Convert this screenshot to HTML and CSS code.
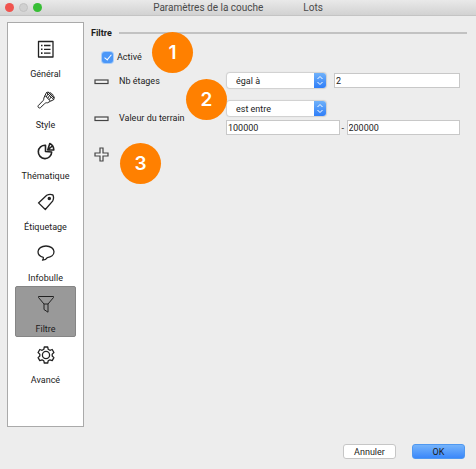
FILE: index.html
```html
<!DOCTYPE html>
<html lang="fr">
<head>
<meta charset="utf-8">
<title>Paramètres de la couche</title>
<link rel="stylesheet" href="styles.css">
</head>
<body>
<header class="titlebar">
  <div class="lights"><i class="light red"></i><i class="light grey"></i><i class="light green"></i></div>
  <h1 class="title"><span>Paramètres de la couche</span><span>Lots</span></h1>
</header>
<div class="content">
  <nav class="sidebar">
    <button type="button" class="tab">
      <svg class="icon" viewBox="0 0 18 18"><rect x="1.500" y="1.500" width="14.500" height="15.500"/><path d="M7 5.500h6.500M7 9.300h6.500M7 13.100h6.500"/><path d="M4 5.500h1.500M4 9.300h1.500M4 13.100h1.500" stroke-width="1.600"/></svg>
      <span>Général</span>
    </button>
    <button type="button" class="tab">
      <svg class="icon thin" viewBox="0 0 18 18"><path d="M8 4.500 13.500 10.200 10.500 11.800C9 11.600 8.200 12 7.300 13L3.300 16.800C2 17.600.4 16 1.200 14.700L5.700 10C6.600 9.200 6.900 8.400 6.800 7.200z"/><path d="M8 4.500 9.500 1.500 16.800 8.600 13.500 10.200M9.500 1.500l1.600-.4 6 6-.3 1.500M9.300 5.900l1.700-3M10.700 7.300l1.900-2.900M12.100 8.700l2.100-2.700M11.100 1.100l1.500.9 1.200-.2.600 1.300 1.300.3.300 1.400 1.200.9-.1 1.400"/></svg>
      <span>Style</span>
    </button>
    <button type="button" class="tab">
      <svg class="icon bold" viewBox="0 0 18 18"><path d="M8.500 3.200A6.700 6.700 0 1 0 14.700 10L8.500 9.500z"/><path d="M10.700 8 12.800 1.600c2.300 1 3.900 3.300 4 6.400zM10.700 8l4.600-4"/></svg>
      <span>Thématique</span>
    </button>
    <button type="button" class="tab">
      <svg class="icon" viewBox="0 0 18 18"><path d="M1.500 9.900 9.700 2.300c1.800-1 4.700-1 6.100-.4.900 1.700.9 4.300-.2 6.200L8.300 16.500z"/><circle cx="12.300" cy="5.500" r="1.100" class="dot"/></svg>
      <span>Étiquetage</span>
    </button>
    <button type="button" class="tab">
      <svg class="icon" viewBox="0 0 18 18"><path d="M6.300 13.300C3.300 12.600 1 10.500 1 7.800 1 4.400 4.600 2 9 2s8 2.400 8 5.800c0 3.200-3 5.400-6.700 5.800-.9 1.500-2.500 2.500-4.800 2.600.8-.8 1-1.800.8-2.900z"/></svg>
      <span>Infobulle</span>
    </button>
    <button type="button" class="tab selected" aria-current="page">
      <svg class="icon thin" viewBox="0 0 18 18"><path d="M1.500 1.500h15v1L11 9v8.200L7 14.500V9L1.500 2.500zM7 9h4"/></svg>
      <span>Filtre</span>
    </button>
    <button type="button" class="tab">
      <svg class="icon" viewBox="0 0 18 18"><path d="M7.300 1h3.400l.5 2.300 1.700 1 2.300-.8 1.700 3-1.700 1.600v1.900l1.700 1.600-1.700 3-2.300-.8-1.700 1-.5 2.200H7.300l-.5-2.200-1.700-1-2.300.8-1.700-3L2.800 10V8.100L1.100 6.500l1.700-3 2.300.8 1.700-1z"/><circle cx="9" cy="9" r="3.600"/></svg>
      <span>Avancé</span>
    </button>
  </nav>
  <main class="panel">
    <h2 class="heading">Filtre</h2>
    <div class="activation">
      <input type="checkbox" id="active" class="check" checked>
      <label for="active">Activé</label>
      <span class="badge badge-one">1</span>
    </div>
    <div class="rule">
      <button type="button" class="tool" aria-label="Supprimer"><svg class="tool-icon" viewBox="0 0 15 15"><rect x="1" y="6" width="13" height="3.500"/></svg></button>
      <label for="floors-op">Nb étages</label>
      <div class="controls">
        <div class="pair">
          <span class="picker"><select id="floors-op"><option>égal à</option></select><svg class="arrows" viewBox="0 0 12 15"><path d="M3.500 6 6 3.500 8.500 6M3.500 9 6 11.500 8.500 9"/></svg></span>
          <input type="text" class="field" aria-label="Nombre d'étages" value="2">
        </div>
      </div>
    </div>
    <div class="rule">
      <button type="button" class="tool" aria-label="Supprimer"><svg class="tool-icon" viewBox="0 0 15 15"><rect x="1" y="6" width="13" height="3.500"/></svg></button>
      <label for="value-op">Valeur du terrain</label>
      <div class="controls">
        <div class="pair">
          <span class="picker"><select id="value-op"><option>est entre</option></select><svg class="arrows" viewBox="0 0 12 15"><path d="M3.500 6 6 3.500 8.500 6M3.500 9 6 11.500 8.500 9"/></svg></span>
        </div>
        <div class="range">
          <input type="text" class="field" aria-label="Minimum" value="100000">
          <span>-</span>
          <input type="text" class="field" aria-label="Maximum" value="200000">
        </div>
        <span class="badge badge-two">2</span>
      </div>
    </div>
    <div class="add">
      <button type="button" class="tool" aria-label="Ajouter"><svg class="tool-icon" viewBox="0 0 15 15"><path d="M6 1h3v5h5v3H9v5H6V9H1V6h5z"/></svg></button>
      <span class="badge badge-three">3</span>
    </div>
  </main>
</div>
<footer class="actions">
  <button type="button" class="action">Annuler</button>
  <button type="button" class="action primary">OK</button>
</footer>
</body>
</html>
```
FILE: styles.css
```css
* { box-sizing: border-box; }
body {
  margin: 0;
  min-height: 100vh;
  background: #ededed;
  color: #1c1c1c;
  font: 9px/12px Roboto, sans-serif;
}
button, input, select { font: inherit; color: inherit; margin: 0; }
h1, h2 { margin: 0; font-size: inherit; }
svg { display: block; fill: none; stroke: #222; }

.titlebar {
  position: relative;
  display: flex;
  align-items: center;
  justify-content: center;
  height: 16px;
  background: linear-gradient(#e9e9e9, #d2d2d2);
  border-bottom: 1px solid #c4c4c4;
}
.lights { position: absolute; left: 5px; top: 3px; display: flex; gap: 5px; }
.light { width: 9px; height: 9px; border-radius: 50%; }
.red { background: #f0544f; }
.grey { background: #d0d0d0; border: 1px solid #c2c2c2; }
.green { background: #37be35; }
.title { display: flex; gap: 40px; font-size: 10px; font-weight: 400; color: #4a4a4a; }

.content { display: flex; gap: 7px; padding: 6px 9px 0 7px; }
.sidebar {
  flex: none;
  width: 77px;
  min-height: 405px;
  padding: 8px 7px;
  background: #fff;
  border: 1px solid #aaa;
}
.tab {
  display: flex;
  flex-direction: column;
  align-items: center;
  gap: 10px;
  width: 100%;
  height: 51px;
  padding: 9px 0 0;
  border: 0;
  border-radius: 2px;
  background: none;
}
.selected { background: #999; border: 1px solid #858585; padding-top: 8px; }
.icon { width: 18px; height: 18px; stroke-width: 1.3; stroke-linejoin: round; }
.thin { stroke-width: 1; }
.bold { stroke-width: 1.6; }
.dot { fill: #222; }

.panel { flex: 1; min-width: 0; padding-top: 5px; }
.heading { display: flex; align-items: center; gap: 7px; }
.heading::after { content: ""; flex: 1; height: 2px; background: #c2c2c2; }
.activation {
  position: relative;
  display: flex;
  align-items: center;
  gap: 4px;
  margin: 12px 0 10px 11px;
}
.check {
  appearance: none;
  display: grid;
  place-items: center;
  width: 11px;
  height: 11px;
  border-radius: 3px;
  background: #4b97f8;
  box-shadow: 0 0 0 1px #a9cdf8;
}
.check::after {
  content: "";
  width: 3px;
  height: 6px;
  margin-bottom: 2px;
  border: solid #fff;
  border-width: 0 1px 1px 0;
  rotate: 40deg;
}
.rule {
  display: grid;
  grid-template-columns: 21px 103px 1fr;
  column-gap: 4px;
  align-items: center;
  margin: 0 7px 12px 3px;
}
.rule .tool { margin-right: 6px; }
.tool { padding: 0; border: 0; background: none; }
.tool-icon { width: 15px; height: 15px; stroke: #444; fill: #f4f4f4; stroke-width: 1.2; }
.controls { position: relative; display: grid; gap: 3px; }
.pair { display: grid; grid-template-columns: 99px 1fr; gap: 8px; padding-left: 1px; }
.range { display: grid; grid-template-columns: 1fr 3px 1fr; align-items: center; gap: 2px; }
.picker { position: relative; display: block; height: 16px; }
.picker select {
  appearance: none;
  display: block;
  width: 100%;
  height: 15px;
  padding: 0 16px 0 9px;
  border: 0;
  border-radius: 3px;
  background: #fff;
  box-shadow: 0 0 1px 1px #cfcfcf;
}
.arrows {
  position: absolute;
  top: 0;
  right: 0;
  width: 12px;
  height: 15px;
  border-radius: 0 3px 3px 0;
  background: linear-gradient(#6fb1fa, #2f7ef8);
  stroke: #fff;
  pointer-events: none;
}
.field {
  width: 100%;
  min-width: 0;
  height: 15px;
  padding: 0 1px;
  border: 1px solid #c8c8c8;
  background: #fff;
}
.add { position: relative; width: 21px; margin: 0 3px; }
.badge {
  position: absolute;
  display: grid;
  place-items: center;
  width: 41px;
  height: 41px;
  border-radius: 50%;
  background: #ff8000;
  color: #fff;
  font: 600 19px/24px Inter, sans-serif;
}
.badge-one { left: 50px; top: -19px; }
.badge-two { left: -40px; top: -22px; }
.badge-three { left: 26px; top: -4px; }

.actions { display: flex; justify-content: flex-end; gap: 16px; padding: 17px 11px 10px; }
.action {
  width: 53px;
  height: 15px;
  padding: 0;
  border: 1px solid #c6c6c6;
  border-radius: 3px;
  background: #fff;
}
.primary { border-color: #4f98f0; background: linear-gradient(#75b4fb, #3a87fa); }
```
